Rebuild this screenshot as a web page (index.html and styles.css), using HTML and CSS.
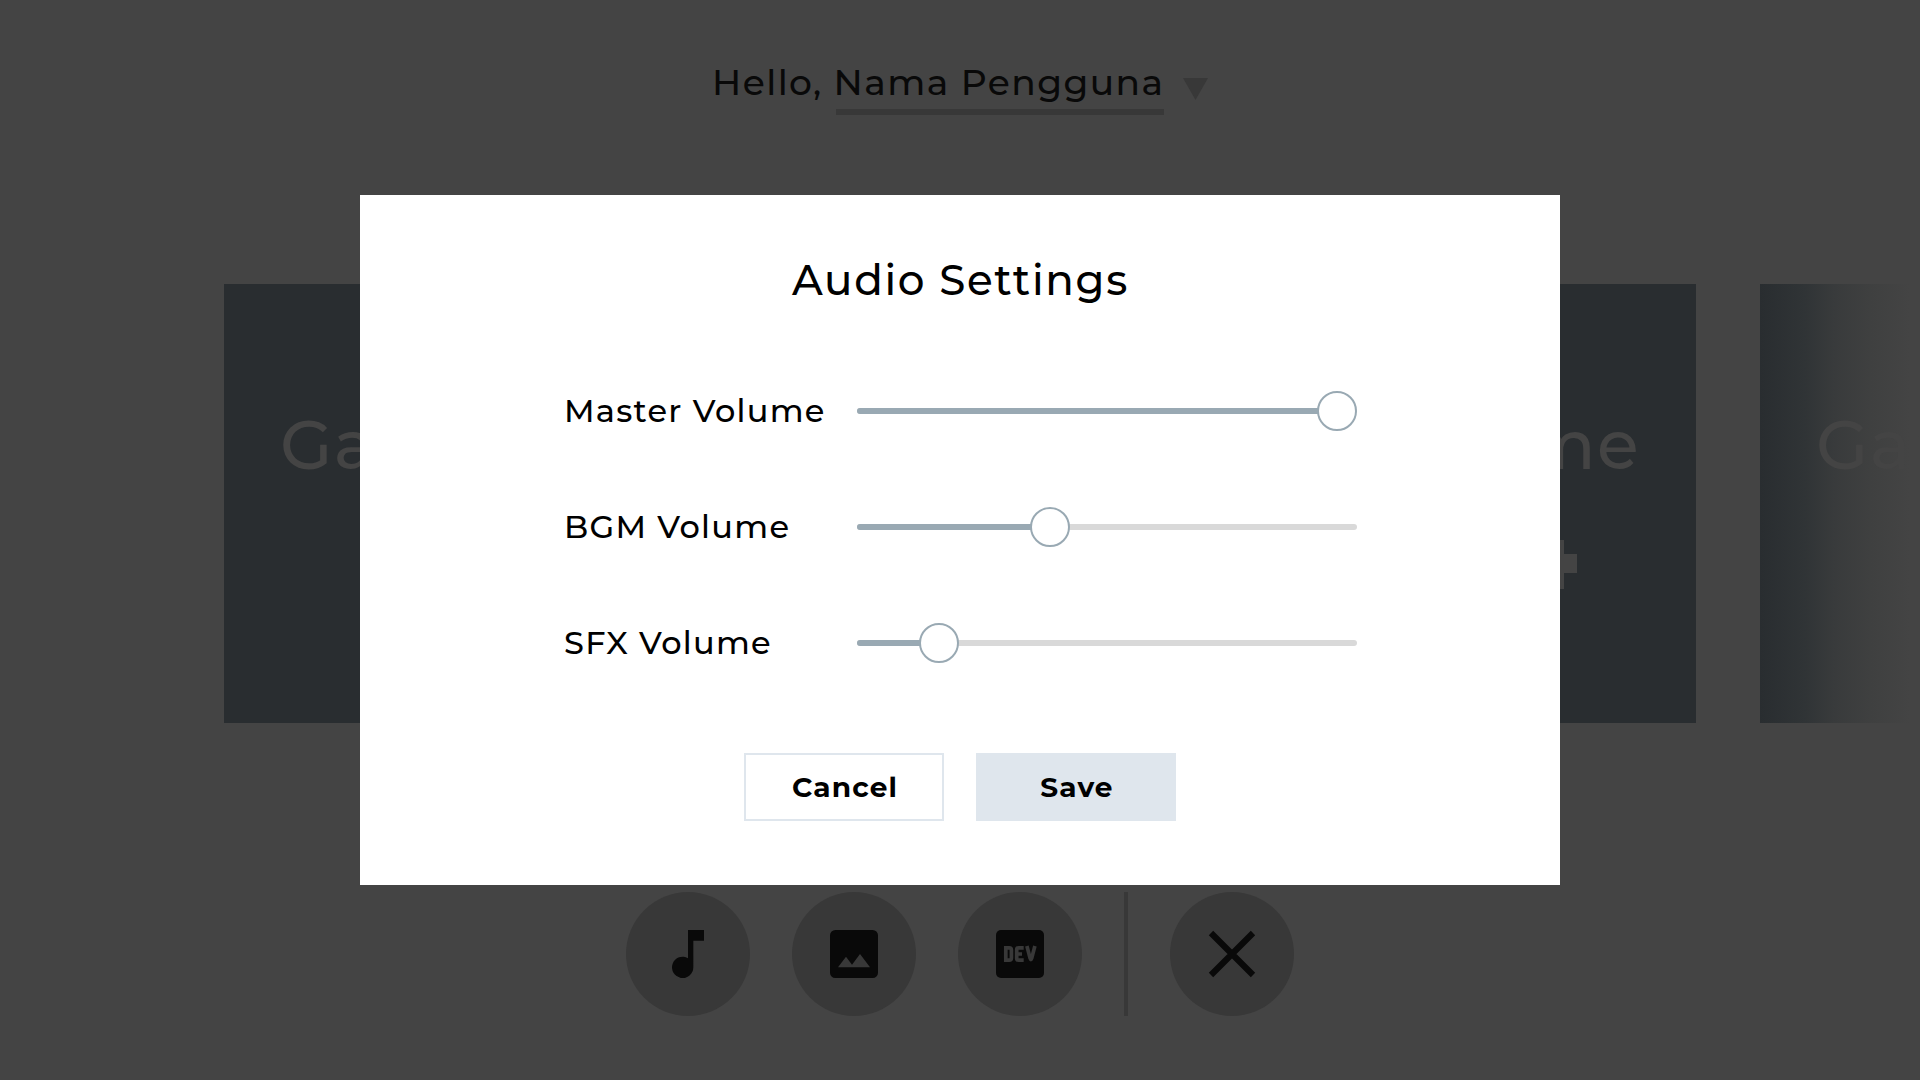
FILE: index.html
```html
<!DOCTYPE html>
<html lang="en">
<head>
<meta charset="utf-8">
<title>Audio Settings</title>
<link rel="stylesheet" href="styles.css">
</head>
<body>
<div class="screen">
  <header class="greeting">
    <span class="hello">Hello,</span>
    <span class="username">Nama Pengguna</span>
    <svg class="caret" width="25" height="22" viewBox="0 0 25 22"><path d="M0 0h25L12.5 22z"/></svg>
  </header>
  <main class="games">
    <article class="game"><h2>Game</h2></article>
    <article class="game"></article>
    <article class="game end"><h2>Game</h2><svg class="plus" width="49" height="49" viewBox="0 0 49 49"><path d="M12 0h24v14h13v19H36v16H12V33H0V14h12z"/></svg></article>
    <article class="game fading"><h2>Game</h2></article>
  </main>
  <nav class="dock">
    <button class="round" aria-label="Audio"><svg width="48" height="48" viewBox="3 3 18 18"><path d="M12 3v10.550A4 4 0 1 0 14 17V7h4V3z"/></svg></button>
    <button class="round" aria-label="Graphics"><svg width="48" height="48" viewBox="3 3 18 18"><path fill-rule="evenodd" d="M5 3h14a2 2 0 0 1 2 2v14a2 2 0 0 1-2 2H5a2 2 0 0 1-2-2V5a2 2 0 0 1 2-2zM6 17h12l-3.750-5-3 4L9 13z"/></svg></button>
    <button class="round" aria-label="Developer"><svg width="48" height="48" viewBox="0 0 48 48"><rect width="48" height="48" rx="5"/><g class="cut"><path d="M9.800 17.800v12.400h3.400q2.200 0 2.200-2.200v-8q0-2.200-2.200-2.200z"/><path d="M27.700 17.800h-5q-2 0-2 2v8.400q0 2 2 2h5M20.500 24h5.500"/><path d="M30.900 16l3.200 12.300q.8 2.500 1.600 0L38.900 16"/></g></svg></button>
    <span class="divider"></span>
    <button class="round" aria-label="Exit"><svg width="48" height="48" viewBox="0 0 48 48"><path class="cross" d="M3 3l42 42M45 3L3 45"/></svg></button>
  </nav>
</div>
<section class="dialog" role="dialog" aria-label="Audio Settings">
  <h1>Audio Settings</h1>
  <div class="sliders">
    <div class="row"><span class="label">Master Volume</span><div class="track"><div class="fill" style="width:480px"></div><div class="knob"></div></div></div>
    <div class="row"><span class="label">BGM Volume</span><div class="track"><div class="fill" style="width:193px"></div><div class="knob"></div></div></div>
    <div class="row"><span class="label">SFX Volume</span><div class="track"><div class="fill" style="width:82px"></div><div class="knob"></div></div></div>
  </div>
  <div class="actions"><button class="cancel">Cancel</button><button class="save">Save</button></div>
</section>
</body>
</html>
```
FILE: styles.css
```css
* { box-sizing: border-box; margin: 0; padding: 0; }
body { width: 1920px; height: 1080px; overflow: hidden; position: relative; background: #444; color: #000; font-family: Montserrat, Inter, sans-serif; font-weight: 500; letter-spacing: 0.04em; }
button { border: 0; font: inherit; color: inherit; letter-spacing: inherit; }
svg { display: block; flex: none; }
h1, h2 { font-weight: 500; white-space: nowrap; }

.screen { height: 1080px; display: flex; flex-direction: column; overflow: hidden; }
.greeting { height: 284px; padding: 59px 0 0 713px; display: flex; align-items: flex-start; color: #090909; font-size: 36px; line-height: 46px; letter-spacing: 0.04em; white-space: nowrap; }
.hello { width: 123px; text-indent: -1px; }
.username { width: 328px; height: 56px; border-bottom: 6px solid #383838; text-indent: -2.5px; }
.caret { margin: 19px 0 0 19px; fill: #383838; }

.games { display: flex; gap: 64px; padding-left: 224px; height: 439px; }
.game { flex: 0 0 448px; background: #292d30; color: #444; padding: 115px 56px 0; display: flex; flex-direction: column; }
.game h2 { font-size: 68px; line-height: 92px; letter-spacing: 0.02em; }
.end { align-items: flex-end; padding-right: 56px; }
.plus { fill: #444; margin: 49px 63px 0 0; }
.fading { background: linear-gradient(90deg, #292d30 0, #303436 45px, #393b3c 75px, #3f4040 110px, #444 150px); }

.dock { display: flex; gap: 42px; padding: 169px 0 0 626px; }
.round { width: 124px; height: 124px; border-radius: 50%; background: #383838; display: flex; align-items: center; justify-content: center; fill: #090909; }
.divider { width: 4px; height: 124px; background: #383838; }
.cut { fill: none; stroke: #383838; stroke-width: 3.700; }
.cross { stroke: #090909; stroke-width: 6.200; }

.dialog { position: absolute; left: 360px; top: 195px; width: 1200px; height: 690px; background: #fff; display: flex; flex-direction: column; align-items: center; }
.dialog h1 { margin-top: 60px; height: 50px; padding-left: 1px; font-size: 42px; line-height: 51px; letter-spacing: 0.04em; }
.sliders { width: 1200px; padding: 76px 0 0 204px; display: flex; flex-direction: column; gap: 56px; }
.row { height: 60px; display: flex; align-items: center; }
.label { width: 293px; font-size: 32px; line-height: 40px; letter-spacing: 0.04em; white-space: nowrap; }
.track { width: 500px; height: 6px; border-radius: 3px; background: #d9d9d9; display: flex; align-items: center; }
.fill { height: 6px; border-radius: 3px; background: #99a9b3; }
.knob { flex: none; width: 40px; height: 40px; margin-left: -20px; border: 2px solid #99a9b3; border-radius: 50%; background: #fff; }
.actions { display: flex; gap: 32px; margin-top: 80px; }
.actions button { width: 200px; height: 68px; padding-left: 2px; font-size: 28px; font-weight: 700; letter-spacing: 0.04em; }
.actions .cancel { background: #fff; border: 2px solid #dfe6ed; }
.actions .save { background: #dfe6ed; }
```
